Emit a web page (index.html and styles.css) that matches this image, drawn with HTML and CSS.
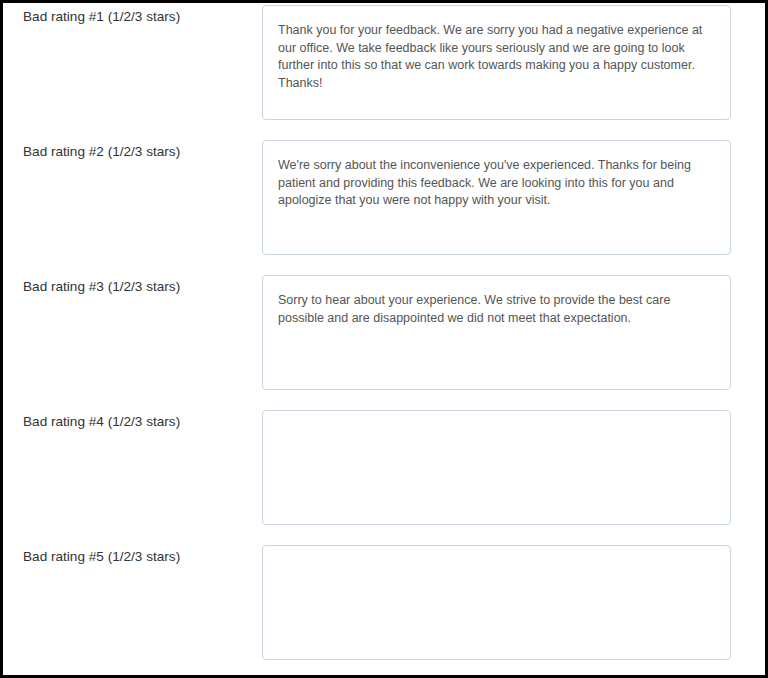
FILE: index.html
```html
<!DOCTYPE html>
<html>
<head>
<meta charset="utf-8">
<link rel="stylesheet" href="styles.css">
</head>
<body>
<div class="frame">
  <div class="row">
    <label class="label">Bad rating #1 (1/2/3 stars)</label>
    <div class="field">Thank you for your feedback. We are sorry you had a negative experience at our office. We take feedback like yours seriously and we are going to look further into this so that we can work towards making you a happy customer. Thanks!</div>
  </div>
  <div class="row">
    <label class="label">Bad rating #2 (1/2/3 stars)</label>
    <div class="field">We're sorry about the inconvenience you've experienced. Thanks for being patient and providing this feedback. We are looking into this for you and apologize that you were not happy with your visit.</div>
  </div>
  <div class="row">
    <label class="label">Bad rating #3 (1/2/3 stars)</label>
    <div class="field">Sorry to hear about your experience. We strive to provide the best care possible and are disappointed we did not meet that expectation.</div>
  </div>
  <div class="row">
    <label class="label">Bad rating #4 (1/2/3 stars)</label>
    <div class="field"></div>
  </div>
  <div class="row">
    <label class="label">Bad rating #5 (1/2/3 stars)</label>
    <div class="field"></div>
  </div>
</div>
</body>
</html>
```
FILE: styles.css
```css
html, body {
  margin: 0;
  padding: 0;
  background: #fff;
}
.frame {
  box-sizing: border-box;
  width: 768px;
  height: 678px;
  border: 3px solid #000;
  padding: 2px 0 0 20px;
  display: flex;
  flex-direction: column;
  gap: 20px;
  font-family: "Liberation Sans", Arial, sans-serif;
}
.row {
  display: grid;
  grid-template-columns: 239px 469px;
  height: 115px;
}
.label {
  font-size: 13.6px;
  line-height: 20px;
  padding-top: 2px;
  color: #333;
}
.field {
  box-sizing: border-box;
  height: 115px;
  border: 1px solid #c9d6e2;
  border-radius: 4px;
  padding: 16px 15px 15px;
  font-size: 12.5px;
  line-height: 17.7px;
  color: #555;
}
```
